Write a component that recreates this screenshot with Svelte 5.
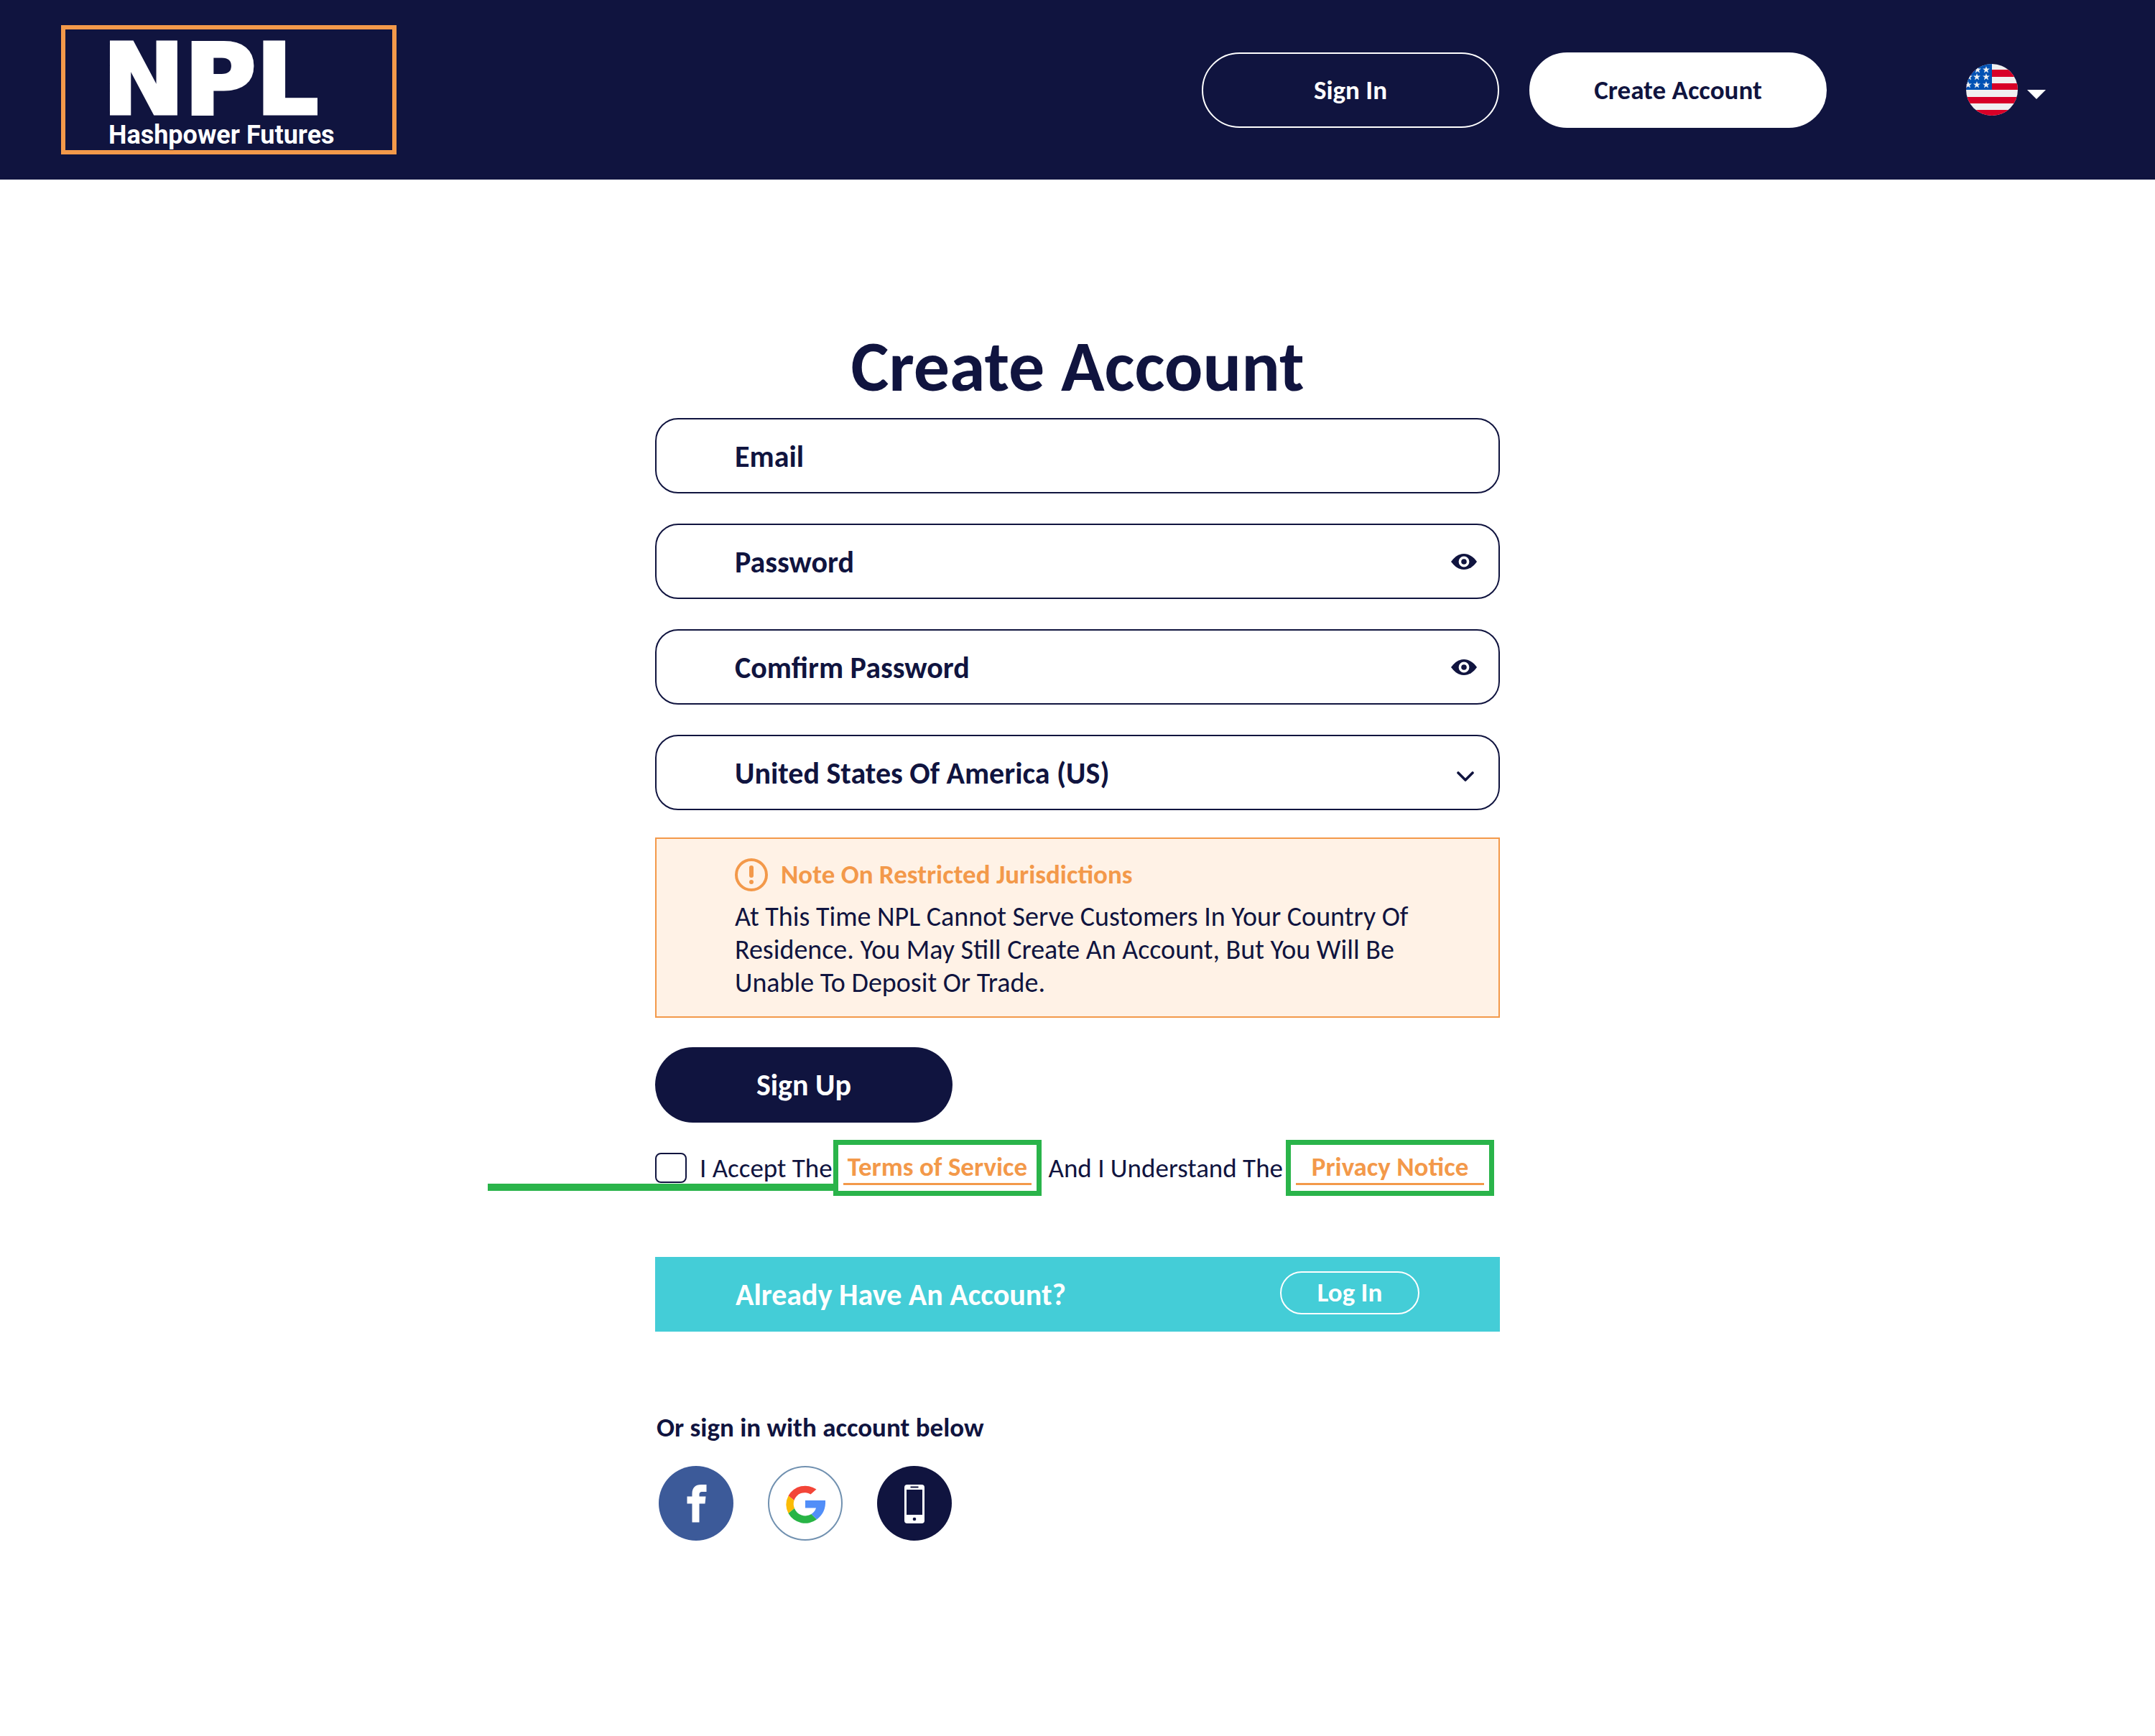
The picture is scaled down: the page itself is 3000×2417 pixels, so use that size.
<script>
  let email = $state('');
  let password = $state('');
  let confirmation = $state('');
  let country = $state('us');
  let accepted = $state(false);
  let showPassword = $state(false);
  let showConfirmation = $state(false);

  // Rows of the flag's canton: star centres that fall inside the circle
  const stars = [
    [16, 8], [28, 8],
    [4, 18], [15, 18], [28, 18],
    [3, 29], [15, 29], [28, 29]
  ];
</script>

{#snippet eye()}
  <svg viewBox="0 0 36 22" width="36" height="22" aria-hidden="true">
    <path d="M0 11C5 4 11 0 18 0s13 4 18 11c-5 7-11 11-18 11S5 18 0 11z" fill="#10143f" />
    <circle cx="18" cy="11" r="5.6" fill="#10143f" stroke="#fff" stroke-width="3.6" />
  </svg>
{/snippet}

<header>
  <a class="brand" href="#home">
    <span class="mark">NPL</span>
    <span class="tagline">Hashpower Futures</span>
  </a>
  <nav>
    <a class="pill outline" href="#signin">Sign In</a>
    <a class="pill solid" href="#create">Create Account</a>
    <button class="language" type="button" aria-label="Language">
      <svg viewBox="0 0 72 72" width="72" height="72" aria-hidden="true">
        <clipPath id="disc"><circle cx="36" cy="36" r="36" /></clipPath>
        <g clip-path="url(#disc)">
          <rect width="72" height="72" fill="#f0f0f0" />
          <path d="M0 8h72v10H0zM0 27h72v9H0zM0 46h72v9H0zM0 64h72v8H0z" fill="#d80027" />
          <rect width="36" height="36" fill="#0052b4" />
          {#each stars as [x, y]}
            <path
              transform="translate({x} {y})"
              d="M0-5 1.2-1.5H5L2 .8 3.1 4.4 0 2.2-3.1 4.4-2 .8-5-1.5h3.8z"
              fill="#f0f0f0"
            />
          {/each}
        </g>
      </svg>
      <svg viewBox="0 0 26 13" width="26" height="13" class="caret" aria-hidden="true">
        <path d="M0 0h26L13 13z" fill="#fff" />
      </svg>
    </button>
  </nav>
</header>

<main>
  <h1>Create Account</h1>
  <form onsubmit={(e) => e.preventDefault()}>
    <div class="fields">
      <div class="field">
        <input type="email" placeholder="Email" aria-label="Email" bind:value={email} />
      </div>
      <div class="field">
        <input
          type={showPassword ? 'text' : 'password'}
          placeholder="Password"
          aria-label="Password"
          bind:value={password}
        />
        <button type="button" aria-label="Show password" onclick={() => (showPassword = !showPassword)}>
          {@render eye()}
        </button>
      </div>
      <div class="field">
        <input
          type={showConfirmation ? 'text' : 'password'}
          placeholder="Comfirm Password"
          aria-label="Comfirm Password"
          bind:value={confirmation}
        />
        <button
          type="button"
          aria-label="Show confirmation"
          onclick={() => (showConfirmation = !showConfirmation)}
        >
          {@render eye()}
        </button>
      </div>
      <div class="field">
        <select aria-label="Country" bind:value={country}>
          <option value="us">United States Of America (US)</option>
        </select>
        <svg class="chevron" viewBox="0 0 24 14" width="24" height="14" aria-hidden="true">
          <path d="M2 2l10 10L22 2" fill="none" stroke="#10143f" stroke-width="3.6" stroke-linecap="round" stroke-linejoin="round" />
        </svg>
      </div>
    </div>

    <section class="notice">
      <h2>
        <svg viewBox="0 0 46 46" width="46" height="46" aria-hidden="true">
          <circle cx="23" cy="23" r="21" fill="none" stroke="#f3994a" stroke-width="4" />
          <path d="M23 13v11" stroke="#f3994a" stroke-width="6" stroke-linecap="round" />
          <circle cx="23" cy="33" r="3" fill="#f3994a" />
        </svg>
        Note On Restricted Jurisdictions
      </h2>
      <p>
        At This Time NPL Cannot Serve Customers In Your Country Of<br />
        Residence. You May Still Create An Account, But You Will Be<br />
        Unable To Deposit Or Trade.
      </p>
    </section>

    <button class="signup" type="submit">Sign Up</button>

    <div class="consent">
      <div class="accept">
        <input id="accept" type="checkbox" bind:checked={accepted} />
        <label for="accept">I Accept The</label>
      </div>
      <a class="boxed leader" href="#terms"><span>Terms of Service</span></a>
      <label class="joiner" for="accept">And I Understand The</label>
      <a class="boxed" href="#privacy"><span>Privacy Notice</span></a>
    </div>
  </form>

  <section class="existing">
    <p>Already Have An Account?</p>
    <a href="#login">Log In</a>
  </section>

  <section class="social">
    <p>Or sign in with account below</p>
    <div class="providers">
      <button type="button" aria-label="Facebook">
        <svg viewBox="0 0 104 104" width="104" height="104" aria-hidden="true">
          <circle cx="52" cy="52" r="52" fill="#3c5a99" />
          <path d="M46.500 78.500V52.500H39.500V42.500H46.500V39C46.500 30 51 26 59 26H66.500V36H61C57.500 36 56.500 37.500 56.500 40V42.500H65.500L64.500 52.500H56.500V78.500z" fill="#fff" />
        </svg>
      </button>
      <button type="button" aria-label="Google">
        <svg viewBox="0 0 104 104" width="104" height="104" aria-hidden="true">
          <circle cx="52" cy="52" r="51" fill="#fff" stroke="#7191b0" stroke-width="2" />
          <path d="M28.500 41.500A27 27 0 0 1 67.500 32.500L59.500 39.500A15.500 15.500 0 0 0 36.500 48z" fill="#f34538" />
          <path d="M28.500 41.500A27 27 0 0 0 28.500 66L37 59A16 16 0 0 1 36.500 48z" fill="#fbbc05" />
          <path d="M28.500 66A27 27 0 0 0 68 74.500L60.500 67A16 16 0 0 1 37 59z" fill="#28b446" />
          <path d="M52 48H80Q81 65 68 74.500L60.500 67Q65.500 64 67 58.500H52z" fill="#518ef8" />
        </svg>
      </button>
      <button type="button" aria-label="Phone">
        <svg viewBox="0 0 104 104" width="104" height="104" aria-hidden="true">
          <circle cx="52" cy="52" r="52" fill="#10143f" />
          <rect x="38" y="26" width="28" height="54" rx="4" fill="#fff" />
          <path d="M41 33h22v35H41zM46.500 28.500h11v2h-11z" fill="#10143f" />
          <circle cx="52" cy="74" r="2.300" fill="#10143f" />
        </svg>
      </button>
    </div>
  </section>
</main>

<style>
  :global(body) {
    margin: 0;
    background: #fff;
  }

  header,
  main,
  input,
  select,
  button {
    font-family: Carlito, Calibri, 'Open Sans', sans-serif;
    color: #10143f;
  }

  header,
  main,
  header *,
  main * {
    box-sizing: border-box;
  }

  a {
    color: inherit;
    text-decoration: none;
  }

  button {
    padding: 0;
    border: 0;
    background: none;
    cursor: pointer;
  }

  svg {
    display: block;
    flex: none;
  }

  header {
    display: flex;
    align-items: center;
    justify-content: space-between;
    padding: 35px 152px 35px 85px;
    background: #10143f;
  }

  .brand {
    display: flex;
    flex-direction: column;
    width: 467px;
    height: 180px;
    padding: 12px 0 0 60px;
    border: 6px solid #f3994a;
    color: #fff;
  }

  .mark {
    margin-left: -8px;
    font: 700 136px/116px 'DejaVu Sans', sans-serif;
    -webkit-text-stroke: 5px #fff;
    paint-order: stroke fill;
    stroke-linejoin: round;
  }

  .tagline {
    font: 700 36px/38px Roboto, sans-serif;
  }

  nav {
    display: flex;
    align-items: center;
    gap: 42px;
  }

  .pill {
    display: flex;
    align-items: center;
    justify-content: center;
    width: 414px;
    height: 105px;
    border: 2px solid #fff;
    border-radius: 53px;
    color: #fff;
    font-size: 37px;
    font-weight: 700;
  }

  .solid {
    background: #fff;
    color: #10143f;
  }

  .language {
    display: flex;
    align-items: center;
    gap: 13px;
    margin-left: 152px;
  }

  .caret {
    margin-top: 12px;
  }

  main {
    width: 100%;
    max-width: 1176px;
    margin: 0 auto;
    padding: 204px 0 80px;
  }

  h1 {
    margin: 0;
    font-size: 100px;
    line-height: 112px;
    text-align: center;
  }

  .fields {
    display: grid;
    gap: 42px;
    margin-top: 16px;
  }

  .field {
    display: flex;
    align-items: center;
    height: 105px;
    padding-right: 30px;
    border: 2px solid #10143f;
    border-radius: 32px;
  }

  .field input,
  .field select {
    flex: 1;
    min-width: 0;
    height: 100%;
    padding: 2px 0 0 109px;
    border: 0;
    outline: 0;
    background: none;
    appearance: none;
    font-size: 42px;
    font-weight: 700;
  }

  .field input::placeholder {
    color: #10143f;
    opacity: 1;
  }

  .chevron {
    margin: 10px 4px 0 0;
  }

  .notice {
    margin-top: 38px;
    padding: 26px 60px 24px 109px;
    border: 2px solid #f3994a;
    background: #fff2e6;
  }

  h2 {
    display: flex;
    align-items: center;
    gap: 18px;
    margin: 0;
    color: #f3994a;
    font-size: 37px;
    line-height: 48px;
  }

  .notice p {
    margin: 11px 0 0;
    font-size: 38px;
    line-height: 46px;
    white-space: nowrap;
  }

  .signup {
    width: 414px;
    height: 105px;
    margin-top: 41px;
    border-radius: 53px;
    background: #10143f;
    color: #fff;
    font-size: 42px;
    font-weight: 700;
  }

  .consent {
    display: grid;
    grid-template-columns: 248px 290px 1fr 290px;
    align-items: center;
    margin-top: 24px;
    padding-right: 8px;
    font-size: 37px;
    white-space: nowrap;
  }

  .accept {
    display: flex;
    align-items: center;
    gap: 18px;
  }

  .accept input {
    width: 44px;
    height: 42px;
    margin: 0;
    border: 2px solid #10143f;
    border-radius: 8px;
    appearance: none;
  }

  .accept input:checked {
    background: #10143f;
  }

  .joiner {
    padding-right: 4px;
    text-align: right;
  }

  .boxed {
    position: relative;
    height: 78px;
    padding: 8px 7px 0;
    border: 7px solid #2ab44a;
    color: #f3994a;
    font-weight: 700;
    text-align: center;
  }

  .boxed span {
    display: block;
    border-bottom: 3px solid #f3994a;
    line-height: 45px;
  }

  .leader::before {
    content: '';
    position: absolute;
    right: 100%;
    bottom: 0;
    width: 488px;
    height: 10px;
    background: #2ab44a;
  }

  .existing {
    display: flex;
    align-items: center;
    justify-content: space-between;
    height: 104px;
    margin-top: 85px;
    padding: 0 112px;
    background: #44cdd7;
    color: #fff;
    font-size: 42px;
    font-weight: 700;
  }

  .existing p {
    margin: 0;
  }

  .existing a {
    width: 194px;
    height: 60px;
    margin-bottom: 4px;
    border: 2px solid #fff;
    border-radius: 30px;
    font-size: 37px;
    line-height: 56px;
    text-align: center;
  }

  .social p {
    margin: 110px 0 0;
    padding-left: 2px;
    font-size: 37px;
    font-weight: 700;
    line-height: 48px;
  }

  .providers {
    display: flex;
    gap: 48px;
    margin-top: 29px;
    padding-left: 5px;
  }
</style>
